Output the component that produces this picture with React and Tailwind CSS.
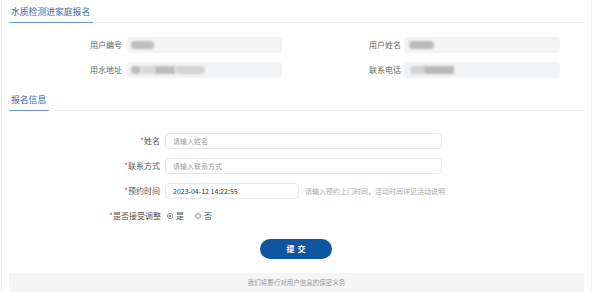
export default function App() {
  const font = "font-['Noto_Sans_CJK_SC','Noto_Sans',sans-serif]";
  return (
    <div className={`w-[594px] h-[292px] bg-white overflow-hidden ${font}`}>
      <div className="ml-px mr-[2px] h-full border-x border-[#eef1f5] px-[7px]">
        {/* header 1 */}
        <div className="h-[23px] flex items-end border-b border-[#eef0f3]">
          <div className="-mb-px h-full w-[84px] flex items-center pl-[2px] pt-px border-b-[1.5px] border-[#6b9bd0] text-[8.8px] text-[#2f6aaa] leading-none whitespace-nowrap">
            水质检测进家庭报名
          </div>
        </div>

        {/* user info */}
        <div className="mt-[14px] flex flex-col gap-[9px]">
          <div className="flex items-center h-4">
            <div className="w-[113px] text-right text-[8px] text-[#666] leading-none">用户编号</div>
            <div className="ml-[5px] w-[155px] h-4 rounded-sm bg-[#f1f3f5] flex items-center pl-[4px]">
              <span className="h-[8px] w-[23px] rounded-full bg-[#bdbdbd] blur-[1px]"></span>
            </div>
            <div className="w-[119px] text-right text-[8px] text-[#666] leading-none">用户姓名</div>
            <div className="ml-[3px] w-[156px] h-4 rounded-sm bg-[#f1f3f5] flex items-center pl-[5px]">
              <span className="h-[8px] w-[25px] rounded-full bg-[#bababa] blur-[1px]"></span>
            </div>
          </div>
          <div className="flex items-center h-4">
            <div className="w-[113px] text-right text-[8px] text-[#666] leading-none">用水地址</div>
            <div className="ml-[5px] w-[155px] h-4 rounded-sm bg-[#f1f3f5] flex items-center pl-[4px]">
              <span className="h-[8px] w-[10px] rounded-full bg-[#bcbcbc] blur-[1px]"></span>
              <span className="h-[8px] w-[14px] bg-[#d8d8d8] blur-[1px]"></span>
              <span className="h-[8px] w-[20px] bg-[#bdbdbd] blur-[1px]"></span>
              <span className="h-[8px] w-[30px] rounded-full bg-[#d4d4d4] blur-[1px]"></span>
            </div>
            <div className="w-[119px] text-right text-[8px] text-[#666] leading-none">联系电话</div>
            <div className="ml-[3px] w-[156px] h-4 rounded-sm bg-[#f1f3f5] flex items-center pl-[6px]">
              <span className="h-[8px] w-[14px] rounded-l-full bg-[#d4d4d4] blur-[1px]"></span>
              <span className="h-[8px] w-[30px] bg-[#bababa] blur-[1px]"></span>
            </div>
          </div>
        </div>

        {/* header 2 */}
        <div className="mt-[10px] h-[23px] flex items-end border-b border-[#eef0f3]">
          <div className="-mb-px h-full w-[40px] flex items-center pl-[2px] pt-px border-b-[1.5px] border-[#6b9bd0] text-[8.8px] text-[#2f6aaa] leading-none whitespace-nowrap">
            报名信息
          </div>
        </div>

        {/* form */}
        <div className="mt-[22px] flex flex-col gap-[9px]">
          <div className="flex items-center h-4">
            <div className="w-[151px] text-right text-[8px] text-[#555] leading-none"><span className="text-[#e0403a]">*</span>姓名</div>
            <div className="ml-[5px] w-[277px] h-4 rounded-sm border border-[#e6e8eb] bg-white flex items-center pl-[7px] text-[7px] text-[#9a9a9a] leading-none">请输入姓名</div>
          </div>
          <div className="flex items-center h-4">
            <div className="w-[151px] text-right text-[8px] text-[#555] leading-none"><span className="text-[#e0403a]">*</span>联系方式</div>
            <div className="ml-[5px] w-[277px] h-4 rounded-sm border border-[#e6e8eb] bg-white flex items-center pl-[7px] text-[7px] text-[#9a9a9a] leading-none">请输入联系方式</div>
          </div>
          <div className="flex items-center h-4">
            <div className="w-[151px] text-right text-[8px] text-[#555] leading-none"><span className="text-[#e0403a]">*</span>预约时间</div>
            <div className="ml-[5px] w-[134px] h-4 rounded-sm border border-[#e6e8eb] bg-white flex items-center pl-[7px] text-[7px] text-[#333] leading-none">2023-04-12 14:22:55</div>
            <div className="ml-[6px] text-[7px] text-[#a8a8a8] leading-none">请输入预约上门时间，活动时间详见活动说明</div>
          </div>
          <div className="flex items-center h-4">
            <div className="w-[152px] text-right text-[8px] text-[#555] leading-none"><span className="text-[#e0403a]">*</span>是否接受调整</div>
            <div className="ml-[6px] flex items-center text-[8px] text-[#555] leading-none">
              <span className="w-[6px] h-[6px] rounded-full border border-[#888] flex items-center justify-center">
                <span className="w-[2.5px] h-[2.5px] rounded-full bg-[#666]"></span>
              </span>
              <span className="ml-[3px]">是</span>
              <span className="ml-[11px] w-[6px] h-[6px] rounded-full border border-[#999]"></span>
              <span className="ml-[3px]">否</span>
            </div>
          </div>
        </div>

        {/* submit */}
        <div className="mt-[15px] flex justify-center pr-[1px]">
          <button className="w-[72px] h-[20px] rounded-full bg-[#0f559f] text-white text-[8px] font-bold tracking-[3px] pl-[3px] leading-none">提交</button>
        </div>

        {/* footer */}
        <div className="mt-[14px] h-[19px] bg-[#f5f5f5] flex items-center justify-center text-[6.5px] text-[#999] leading-none">
          我们将履行对用户信息的保密义务
        </div>
      </div>
    </div>
  );
}
